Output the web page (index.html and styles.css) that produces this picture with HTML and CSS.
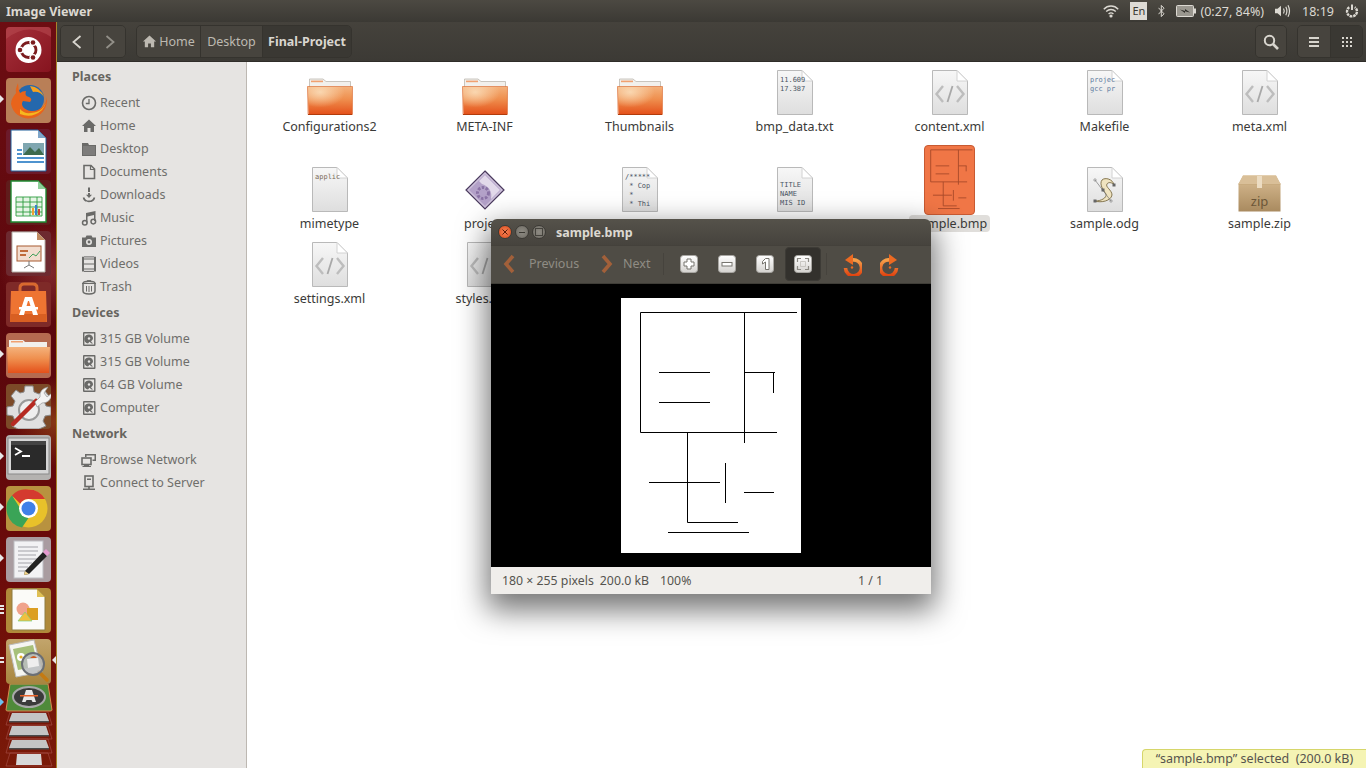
FILE: index.html
```html
<!DOCTYPE html>
<html lang="en">
<head>
    <meta charset="UTF-8">
    <meta name="viewport" content="width=device-width, initial-scale=1.0">
    <title>Image Viewer</title>
    <link rel="stylesheet" href="styles.css">
</head>
<body>
    <svg class="defs" aria-hidden="true">
        <defs>
            <linearGradient id="paperFill" x1="0" y1="0" x2="0" y2="1">
                <stop offset="0" stop-color="#f7f7f7"/>
                <stop offset="1" stop-color="#dedede"/>
            </linearGradient>
            <linearGradient id="folderFill" x1="0" y1="0" x2="0" y2="1">
                <stop offset="0" stop-color="#f4b27c"/>
                <stop offset="0.45" stop-color="#ef8f4e"/>
                <stop offset="1" stop-color="#e4501a"/>
            </linearGradient>
            <radialGradient id="folderGlow" cx="0.28" cy="0.2" r="0.55">
                <stop offset="0" stop-color="#fbe0bd" stop-opacity=".85"/>
                <stop offset="1" stop-color="#fbe0bd" stop-opacity="0"/>
            </radialGradient>
            <linearGradient id="boxFill" x1="0" y1="0" x2="0" y2="1">
                <stop offset="0" stop-color="#d9bd93"/>
                <stop offset="1" stop-color="#a98a5f"/>
            </linearGradient>
            <linearGradient id="rotFill" x1="0" y1="0" x2="0" y2="1">
                <stop offset="0" stop-color="#f5a04a"/>
                <stop offset="1" stop-color="#e0420f"/>
            </linearGradient>
            <linearGradient id="btnFill" x1="0" y1="0" x2="0" y2="1">
                <stop offset="0" stop-color="#ffffff"/>
                <stop offset="1" stop-color="#d4d2cf"/>
            </linearGradient>

            <g id="paper">
                <path d="M.5.5H25L35.5 11V44.5H.5Z" fill="url(#paperFill)" stroke="#b9b9b9"/>
                <path d="M25 .5V11H35.5Z" fill="#fff" stroke="#d2d2d2"/>
            </g>
            <g id="xmlmark" fill="none" stroke="#bdbdbd" stroke-width="2.4">
                <path d="M11 16L4.5 24L11 32"/>
                <path d="M25 16L31.5 24L25 32"/>
                <path d="M20.5 16L15.5 32" stroke="#a8a8a8" stroke-width="1.8"/>
            </g>
            <g id="folder">
                <path d="M2.5 1H16L19 3.5H43.5V10H2.5Z" fill="#f2f0ec" stroke="#bdb8b0" stroke-width=".8"/>
                <rect x="4" y="2.6" width="12" height="1.6" fill="#f0a070"/>
                <path d="M.5 8.5H45.5V36.5H1.5Z" fill="url(#folderFill)"/>
                <path d="M.5 8.5H45.5V36.5H1.5Z" fill="url(#folderGlow)"/>
                <path d="M.5 8.5H45.5L45.3 36.5H1Z" fill="none" stroke="#d8642c" stroke-width=".6"/>
                <path d="M1 36.5H45" stroke="#b23c0c"/>
            </g>
            <g id="plan" fill="none" stroke="currentColor">
                <path d="M176 14.5H19.5V134.5H156"/>
                <path d="M123.5 14.5V145"/>
                <path d="M38 74.5H89M38 104.5H89"/>
                <path d="M123.5 74.5H154M152.5 74.5V95"/>
                <path d="M66.5 134.5V224.5H117"/>
                <path d="M28 184.5H99"/>
                <path d="M104.5 165V205"/>
                <path d="M123 194.5H153"/>
                <path d="M47 234.5H128"/>
            </g>

            <g id="i-home"><path d="M8 1.5L15 8H13V14H9.5V10H6.5V14H3V8H1Z"/></g>
            <g id="i-clock" fill="none" stroke="currentColor"><circle cx="8" cy="8" r="6.5" stroke-width="1.6"/><path d="M8 4V8.5L4.8 8.5" stroke-width="1.3"/></g>
            <g id="i-folder"><path d="M1 2H7L8 4H15V15H1ZM2 5V14H14V5Z" fill-rule="evenodd"/><rect x="2" y="5" width="12" height="9" opacity=".85"/></g>
            <g id="i-doc"><path d="M3 1.5H10L13.5 5V14.5H3Z" fill="none" stroke="currentColor" stroke-width="1.6"/><path d="M9.5 1.5V5.5H13.5" fill="none" stroke="currentColor" stroke-width="1.2"/></g>
            <g id="i-down"><path d="M7 .5H9V5H7ZM7 6H9V7.8H11L8 11L5 7.8H7Z"/><path d="M1.8 10.5H3.6C3.8 12.6 5.6 13.6 8 13.6S12.2 12.6 12.4 10.5H14.2C14 13.6 11.4 15.2 8 15.2S2 13.6 1.8 10.5Z"/></g>
            <g id="i-music"><path d="M5 3L14.5 1V11H13V5L6.5 6.4V12.5H5Z"/><g fill="none" stroke="currentColor" stroke-width="1.5"><circle cx="3.8" cy="12.8" r="2.3"/><circle cx="12.3" cy="11.6" r="2.3"/></g></g>
            <g id="i-camera"><path d="M5.5 2.5H10.5L11.5 4.5H15V14H1V4.5H4.5ZM8 6A3 3 0 1 0 8 12A3 3 0 0 0 8 6Z" fill-rule="evenodd"/><circle cx="8" cy="9" r="1.4"/></g>
            <g id="i-film"><path d="M1 .8H3V15.5H1ZM13 .8H15V15.5H13Z"/><path d="M3 3H13M3 8H13M3 13H13M3 .9H13M3 15.4H13" stroke="currentColor" fill="none"/></g>
            <g id="i-trash" fill="none" stroke="currentColor"><path d="M2 4.5C2 3 5 2.2 8 2.2S14 3 14 4.5V12C14 14 11 15 8 15S2 14 2 12Z" stroke-width="1.5"/><path d="M1 4.5H15M5.5 7V12.5M8 7V13M10.5 7V12.5" stroke-width="1"/><path d="M6 2H10" stroke-width="1.6"/></g>
            <g id="i-disk"><path d="M3 1H13.5Q14.5 1 14.5 2V14Q14.5 15 13.5 15H3Q2 15 2 14V2Q2 1 3 1ZM3.4 2.4V13.6H13.1V2.4Z" fill-rule="evenodd"/><path d="M8.5 3.5A4 4 0 0 1 12 8L10 10.5L12 12.5H10.5L8.5 10.8L7 12.5A4.500 4.500 0 0 1 8.500 3.500Z"/><circle cx="8" cy="7.5" r="1.2" fill="#e6e4e2"/></g>
            <g id="i-net"><rect x="1" y="6" width="9" height="6.500" fill="none" stroke="currentColor" stroke-width="1.600"/><path d="M4 2H15V9H11.500V7.500H13.500V3.500H5.500V5H4Z"/><path d="M3 13H8V15H3Z"/><path d="M1.500 14.500H10" stroke="currentColor"/></g>
            <g id="i-server"><rect x="4" y="1" width="8" height="10.500" fill="none" stroke="currentColor" stroke-width="1.600"/><path d="M6 3.500H10V5H6Z"/><path d="M7.200 11.500H8.800V13.500H7.200ZM2 13.500H14V15H2Z"/></g>
        </defs>
    </svg>

    <header class="topbar">
        <span class="app-title">Image Viewer</span>
        <div class="indicators">
            <svg class="ind" width="16" height="14" viewBox="0 0 16 14" fill="none" stroke="#dcd9d2" stroke-width="1.4">
                <path d="M.8 5.200C4.800 1 11.200 1 15.200 5.200"/>
                <path d="M3.200 7.600C6 4.800 10 4.800 12.800 7.600"/>
                <path d="M5.600 10C7 8.700 9 8.700 10.400 10"/>
                <circle cx="8" cy="12" r=".9" fill="#dcd9d2"/>
            </svg>
            <span class="lang">En</span>
            <svg class="ind" width="7" height="14" viewBox="0 0 7 14" fill="none" stroke="#dcd9d2" stroke-width="1">
                <path d="M.5 3.800L6 9.800L3.300 12.600V1.400L6 4.200L.5 10.200"/>
            </svg>
            <svg class="ind" width="20" height="12" viewBox="0 0 20 12">
                <rect x=".5" y=".5" width="17" height="11" rx="1" fill="#9a978f" stroke="#dcd9d2"/>
                <rect x="18" y="3.500" width="2" height="5" fill="#dcd9d2"/>
                <path d="M4 4.500L9 6V4L14 7.500L9 6.200V8Z" fill="#2f2d29"/>
            </svg>
            <span class="battery-text">(0:27, 84%)</span>
            <svg class="ind" width="16" height="14" viewBox="0 0 16 14" fill="none" stroke="#dcd9d2" stroke-width="1.200">
                <path d="M0 4.800H2.500L6 1.800V12.200L2.500 9.200H0Z" fill="#dcd9d2" stroke="none"/>
                <path d="M8.500 4.500Q10 7 8.500 9.500"/>
                <path d="M10.800 2.800Q13 7 10.800 11.200"/>
                <path d="M13 1.200Q16 7 13 12.800"/>
            </svg>
            <span class="clock">18:19</span>
            <svg class="ind" width="14" height="14" viewBox="0 0 14 14" fill="none" stroke="#dcd9d2">
                <path d="M4.300 3.200A5 5 0 1 0 9.700 3.200" stroke-width="2.400" stroke-dasharray="2.600 .8"/>
                <path d="M7 .5V6" stroke-width="2"/>
            </svg>
        </div>
    </header>

    <div class="desktop">
        <nav class="launcher">
            <div class="tile tile-dash">
                <svg viewBox="0 0 45 45">
                    <path d="M0 12Q22 -6 45 10V0H0Z" fill="#b6484f" opacity=".6"/>
                    <circle cx="22.500" cy="23" r="13" fill="#fff"/>
                    <circle cx="22.500" cy="23" r="7.500" fill="none" stroke="#7c1c1f" stroke-width="2.800"/>
                    <g fill="#fff"><circle cx="14" cy="23" r="3.600"/><circle cx="27" cy="15.500" r="3.600"/><circle cx="27" cy="30.500" r="3.600"/></g>
                    <g fill="#7c1c1f"><circle cx="14" cy="23" r="2.300"/><circle cx="27" cy="15.500" r="2.300"/><circle cx="27" cy="30.500" r="2.300"/></g>
                </svg>
            </div>
            <div class="tile tile-firefox">
                <svg viewBox="0 0 45 45">
                    <circle cx="24" cy="21" r="14" fill="#2568ad"/>
                    <path d="M24 8Q34 9 38 19Q34 13 27 14Z" fill="#f6a21e"/>
                    <path d="M12 5Q9 12 10 15Q5 21 5 26C7 37 18 42 26 40C35 39 42 30 41 19C40 28 33 34 25 33C18 32 14 27 17 23L24 24Q27 21 23 19Q18 18 20 13Q16 13 14 15Q12 11 12 5Z" fill="#e8641b"/>
                    <path d="M14 36Q26 41 36 32Q40 27 41 20Q39 34 25 35Q18 36 14 31Z" fill="#f6b81e"/>
                </svg>
            </div>
            <div class="tile tile-writer">
                <svg viewBox="0 0 45 45">
                    <path d="M5 1H32L40 9V42H5Z" fill="#fff" stroke="#1f5f9a" stroke-width="1"/>
                    <path d="M32 1L40 9H32Z" fill="#7fa6c9"/>
                    <rect x="17" y="14" width="21" height="12" fill="#7fa6b0"/>
                    <path d="M17 26L24 18L29 23L33 19L38 26Z" fill="#3d6a4d"/>
                    <path d="M11 21H16M11 25H16M11 29H38M11 33H38" stroke="#4f93cf" stroke-width="2"/>
                </svg>
            </div>
            <div class="tile tile-calc">
                <svg viewBox="0 0 45 45">
                    <path d="M5 1H32L40 9V42H5Z" fill="#fff" stroke="#1f8a32" stroke-width="1.400"/>
                    <path d="M32 1L40 9H32Z" fill="#8fd09a"/>
                    <path d="M10 17H36V36H10ZM10 22H36M10 27H36M10 32H36M17 17V36M24 17V36M31 17V36" fill="#e6f5e6" stroke="#2c9d40" stroke-width=".9"/>
                    <rect x="26" y="28" width="2" height="7" fill="#f0a030"/><rect x="29" y="25" width="2" height="10" fill="#3b7fd0"/><rect x="32" y="29" width="2" height="6" fill="#d04a30"/>
                </svg>
            </div>
            <div class="tile tile-impress">
                <svg viewBox="0 0 45 45">
                    <path d="M6 1H31L39 9V41H6Z" fill="#fff" stroke="#b5b0a8"/>
                    <path d="M31 1L39 9H31Z" fill="#c08a60"/>
                    <rect x="11" y="15" width="24" height="15" fill="#f2ddd0" stroke="#a85a30"/>
                    <rect x="14" y="19" width="8" height="2" fill="#c06a3a"/><rect x="14" y="23" width="6" height="2" fill="#c06a3a"/>
                    <path d="M23 27L27 23L30 25L34 20" stroke="#3fa05a" fill="none"/>
                    <path d="M23 30V34M23 34L18 37M23 34L28 37" stroke="#777"/>
                </svg>
            </div>
            <div class="tile tile-software">
                <svg viewBox="0 0 45 45">
                    <path d="M14 11V6Q14 2 18 2H27Q31 2 31 6V11" fill="none" stroke="#d8692f" stroke-width="3"/>
                    <path d="M5 9H40L41 40H4Z" fill="#ee7432"/>
                    <path d="M4.500 32H40.500V40H4Z" fill="#d85f22"/>
                    <path d="M19 15H26L32 33H27L26 29H19L18 33H13ZM20.500 24H24.500L23 19H22Z" fill="#fff" fill-rule="evenodd"/>
                    <rect x="13" y="25" width="19" height="2.500" fill="#fff"/>
                </svg>
            </div>
            <div class="tile tile-files">
                <svg viewBox="0 0 45 45">
                    <path d="M3 7H17L19 9H41V18H3Z" fill="#f2f0ec"/>
                    <rect x="5" y="8" width="12" height="1.500" fill="#f0a070"/>
                    <path d="M1 14H44L43 40H2Z" fill="url(#folderFill)"/>
                </svg>
            </div>
            <div class="tile tile-settings">
                <svg viewBox="0 0 45 45">
                    <path d="M19 2H27L28 8L33 10L38 6L43 12L38 17L40 22L45 23V31L39 32L37 37L40 42L33 45H12L6 42L9 37L7 32L1 31V23L7 22L9 17L5 12L10 6L14 9L18 8Z" fill="#e0e0e0" stroke="#8a8a8a"/>
                    <circle cx="23" cy="26" r="10" fill="#eeeeee" stroke="#9a9a9a" stroke-width="2"/>
                    <path d="M7 40L30 17" stroke="#b62a22" stroke-width="4.500" stroke-linecap="round"/>
                    <path d="M29 18L34 13Q33 5 42 3L38 9L41 13L46 9Q45 19 36 19L31 23Z" fill="#f4f4f4" stroke="#999" stroke-width=".7"/>
                </svg>
            </div>
            <div class="tile tile-terminal">
                <svg viewBox="0 0 45 45">
                    <rect x="2" y="3" width="41" height="36" fill="#d6d6d6" stroke="#8a8a8a"/>
                    <rect x="5" y="6" width="35" height="29" fill="#2a2a2a"/>
                    <rect x="5" y="6" width="35" height="4" fill="#444"/>
                    <path d="M9 13L15 16.500L9 20" fill="none" stroke="#fff" stroke-width="1.800"/>
                    <path d="M16 21H24" stroke="#fff" stroke-width="1.800"/>
                </svg>
            </div>
            <div class="tile tile-chrome">
                <svg viewBox="0 0 45 45">
                    <circle cx="22.500" cy="22.500" r="19" fill="#e8c12a"/>
                    <path d="M22.500 3.500A19 19 0 0 1 39 13H22.500A9.500 9.500 0 0 0 14.300 17.700L6 9.500A19 19 0 0 1 22.500 3.500Z" fill="#d43a2f"/>
                    <path d="M6 9.500L14.300 22.500A9.500 9.500 0 0 0 22.500 32L16 41.500A19 19 0 0 1 6 9.500Z" fill="#3aa457"/>
                    <circle cx="22.500" cy="22.500" r="9.500" fill="#fff"/>
                    <circle cx="22.500" cy="22.500" r="7" fill="#3f80e8"/>
                </svg>
            </div>
            <div class="tile tile-editor">
                <svg viewBox="0 0 45 45">
                    <rect x="8" y="4" width="29" height="37" fill="#f2f2f4" stroke="#bdbdc2"/>
                    <path d="M12 10H32M12 14H32M12 18H30M12 22H32M12 26H26M12 30H22M12 34H24" stroke="#a2a2a8"/>
                    <path d="M19 34L37 15L41 19L23 37L18 38Z" fill="#222"/>
                    <path d="M37 15L40 12L44 16L41 19Z" fill="#e59ad0"/>
                    <path d="M19 34L23 37L18 38Z" fill="#f2d58a"/>
                </svg>
            </div>
            <div class="tile tile-draw">
                <svg viewBox="0 0 45 45">
                    <path d="M6 1H31L39 9V42H6Z" fill="#fbfbf8" stroke="#8f7d40" stroke-width="1"/>
                    <path d="M31 1L39 9H31Z" fill="#dfc055"/>
                    <circle cx="17" cy="21" r="6.500" fill="#f0a38c"/>
                    <rect x="21" y="20" width="11" height="12" fill="#dc9f22"/>
                    <path d="M12 33L19 24L26 33Z" fill="#f0c040" stroke="#7fd07f" stroke-width=".7"/>
                </svg>
            </div>
            <div class="tile tile-viewer">
                <svg viewBox="0 0 45 45">
                    <path d="M3 6L28 1L36 33L10 38Z" fill="#f5f5f2" stroke="#bbb"/>
                    <path d="M7 10L27 6L32 27L12 31Z" fill="#a6c07a"/>
                    <circle cx="15" cy="18" r="4" fill="#fff"/><circle cx="15" cy="18" r="1.600" fill="#e8b020"/>
                    <path d="M33 33L41 41" stroke="#c47a12" stroke-width="3.500" stroke-linecap="round"/>
                    <circle cx="27" cy="25" r="11" fill="#b8bcc0" fill-opacity=".85" stroke="#6b6f75" stroke-width="2"/>
                    <path d="M21 20L32 19L33 27L22 29Z" fill="#eee"/>
                    <path d="M24 19Q28 15 31 19" fill="#d05a20"/>
                </svg>
            </div>
            <div class="tile-squash">
                <svg viewBox="0 0 48 28">
                    <path d="M5 0H43L47 26Q47 27 45 27H3Q1 27 1 26Z" fill="#4f8a3a" stroke="#d98a50"/>
                    <ellipse cx="24" cy="13" rx="16" ry="10" fill="#3a3a3a" stroke="#a8a8a8" stroke-width="2"/>
                    <path d="M21 6H27L31 18H27.500L26.500 16H21.500L20.500 18H17Z" fill="#e8e8e8"/>
                    <rect x="15" y="11" width="18" height="1.500" fill="#e8632a"/>
                </svg>
            </div>
            <div class="tile-stack">
                <svg viewBox="0 0 48 56">
                    <g fill="none" stroke="#a8504a" stroke-width=".6">
                        <path d="M5 0H43L47 13H1Z"/><path d="M5 14H43L47 27H1Z"/><path d="M5 27H43L47 41H1Z"/><path d="M5 41H43L47 54H1Z"/>
                    </g>
                    <g fill="#c4c4c4">
                        <path d="M7 1H41L44 9H4Z"/><path d="M7 14H41L44 23H4Z"/><path d="M7 28H41L44 36H4Z"/>
                        <path d="M12 42H36L37 53H11Z" fill="#d8d8d8"/>
                    </g>
                    <g fill="#4a4a4a"><path d="M4 9H44V10.500H4Z"/><path d="M4 23H44V24.500H4Z"/><path d="M4 36H44V37.500H4Z"/></g>
                </svg>
            </div>

            <span class="pip pip-firefox"></span>
            <span class="pip pip-files"></span>
            <span class="pip pip-terminal"></span>
            <span class="pip pip-chrome"></span>
            <span class="pip pip-editor"></span>
            <span class="dash dash-a"></span><span class="dash dash-b"></span><span class="dash dash-c"></span>
            <span class="dash dash-d"></span><span class="dash dash-e"></span>
            <span class="pip pip-active"></span>
            <span class="pip pip-updates"></span>
        </nav>

        <div class="files-window">
            <div class="toolbar">
                <div class="btn-group">
                    <div class="tool-btn nav-btn">
                        <svg width="12" height="14" viewBox="0 0 12 14" fill="none" stroke="#d8d5ce" stroke-width="1.800"><path d="M9.500 1L2.500 7L9.500 13"/></svg>
                    </div>
                    <div class="tool-btn nav-btn">
                        <svg width="12" height="14" viewBox="0 0 12 14" fill="none" stroke="#928f88" stroke-width="1.800"><path d="M2.500 1L9.500 7L2.500 13"/></svg>
                    </div>
                </div>
                <div class="btn-group path-bar">
                    <div class="tool-btn crumb crumb-home">
                        <svg class="crumb-icon" viewBox="0 0 16 16"><use href="#i-home"/></svg>Home
                    </div>
                    <div class="tool-btn crumb crumb-desktop">Desktop</div>
                    <div class="tool-btn crumb crumb-current">Final-Project</div>
                </div>
                <div class="toolbar-right">
                    <div class="btn-group">
                        <div class="tool-btn icon-btn icon-btn-search">
                            <svg width="16" height="16" viewBox="0 0 16 16" fill="none" stroke="#d8d5ce" stroke-width="2"><circle cx="6.500" cy="6.500" r="4.700"/><path d="M10 10L15 15" stroke-width="2.600"/></svg>
                        </div>
                    </div>
                    <div class="btn-group">
                        <div class="tool-btn icon-btn">
                            <svg width="12" height="12" viewBox="0 0 12 12" fill="#d8d5ce"><rect x="1" y="1" width="10" height="2"/><rect x="1" y="5" width="10" height="2"/><rect x="1" y="9" width="10" height="2"/></svg>
                        </div>
                        <div class="tool-btn icon-btn icon-btn-dark">
                            <svg width="12" height="12" viewBox="0 0 12 12" fill="#d8d5ce"><rect x="1" y="1" width="2" height="2"/><rect x="5" y="1" width="2" height="2"/><rect x="9" y="1" width="2" height="2"/><rect x="1" y="5" width="2" height="2"/><rect x="5" y="5" width="2" height="2"/><rect x="9" y="5" width="2" height="2"/><rect x="1" y="9" width="2" height="2"/><rect x="5" y="9" width="2" height="2"/><rect x="9" y="9" width="2" height="2"/></svg>
                        </div>
                    </div>
                </div>
            </div>

            <div class="files-body">
                <aside class="sidebar">
                    <h3>Places</h3>
                    <ul>
                        <li><svg viewBox="0 0 16 16"><use href="#i-clock"/></svg>Recent</li>
                        <li><svg viewBox="0 0 16 16"><use href="#i-home"/></svg>Home</li>
                        <li><svg viewBox="0 0 16 16"><use href="#i-folder"/></svg>Desktop</li>
                        <li><svg viewBox="0 0 16 16"><use href="#i-doc"/></svg>Documents</li>
                        <li><svg viewBox="0 0 16 16"><use href="#i-down"/></svg>Downloads</li>
                        <li><svg viewBox="0 0 16 16"><use href="#i-music"/></svg>Music</li>
                        <li><svg viewBox="0 0 16 16"><use href="#i-camera"/></svg>Pictures</li>
                        <li><svg viewBox="0 0 16 16"><use href="#i-film"/></svg>Videos</li>
                        <li><svg viewBox="0 0 16 16"><use href="#i-trash"/></svg>Trash</li>
                    </ul>
                    <h3>Devices</h3>
                    <ul>
                        <li><svg viewBox="0 0 16 16"><use href="#i-disk"/></svg>315 GB Volume</li>
                        <li><svg viewBox="0 0 16 16"><use href="#i-disk"/></svg>315 GB Volume</li>
                        <li><svg viewBox="0 0 16 16"><use href="#i-disk"/></svg>64 GB Volume</li>
                        <li><svg viewBox="0 0 16 16"><use href="#i-disk"/></svg>Computer</li>
                    </ul>
                    <h3>Network</h3>
                    <ul>
                        <li><svg viewBox="0 0 16 16"><use href="#i-net"/></svg>Browse Network</li>
                        <li><svg viewBox="0 0 16 16"><use href="#i-server"/></svg>Connect to Server</li>
                    </ul>
                </aside>

                <main class="file-grid">
                    <div class="file">
                        <svg class="icon-folder" viewBox="0 0 46 37"><use href="#folder"/></svg>
                        <span class="file-name">Configurations2</span>
                    </div>
                    <div class="file">
                        <svg class="icon-folder" viewBox="0 0 46 37"><use href="#folder"/></svg>
                        <span class="file-name">META-INF</span>
                    </div>
                    <div class="file">
                        <svg class="icon-folder" viewBox="0 0 46 37"><use href="#folder"/></svg>
                        <span class="file-name">Thumbnails</span>
                    </div>
                    <div class="file">
                        <svg class="icon-doc" viewBox="0 0 36 45"><use href="#paper"/><text class="peek peek-grey" x="3" y="12">11.609</text><text class="peek peek-grey" x="3" y="21">17.387</text></svg>
                        <span class="file-name">bmp_data.txt</span>
                    </div>
                    <div class="file">
                        <svg class="icon-doc" viewBox="0 0 36 45"><use href="#paper"/><use href="#xmlmark"/></svg>
                        <span class="file-name">content.xml</span>
                    </div>
                    <div class="file">
                        <svg class="icon-doc" viewBox="0 0 36 45"><use href="#paper"/><text class="peek peek-blue" x="3" y="12">projec</text><text class="peek peek-blue" x="3" y="21">gcc pr</text></svg>
                        <span class="file-name">Makefile</span>
                    </div>
                    <div class="file">
                        <svg class="icon-doc" viewBox="0 0 36 45"><use href="#paper"/><use href="#xmlmark"/></svg>
                        <span class="file-name">meta.xml</span>
                    </div>

                    <div class="file">
                        <svg class="icon-doc" viewBox="0 0 36 45"><use href="#paper"/><text class="peek peek-brown" x="3" y="12">applic</text></svg>
                        <span class="file-name">mimetype</span>
                    </div>
                    <div class="file">
                        <svg class="icon-glade" viewBox="0 0 40 40">
                            <path d="M20 1L39 20L20 39L1 20Z" fill="#cfc2dc" stroke="#4a3a5e" stroke-width="1.200"/>
                            <path d="M20 4L36 20L20 36L4 20Z" fill="#b3a1c8"/>
                            <path d="M20 5L35 20L26 29Q28 18 17 14L14 11Z" fill="#e2d9ea"/>
                            <circle cx="18" cy="23" r="5.500" fill="none" stroke="#8a72a5" stroke-width="3" stroke-dasharray="2.500 1.500"/>
                        </svg>
                        <span class="file-name">project</span>
                    </div>
                    <div class="file">
                        <svg class="icon-doc" viewBox="0 0 36 45"><use href="#paper"/><text class="peek peek-grey" x="3" y="12">/*****</text><text class="peek peek-grey" x="3" y="21"> * Cop</text><text class="peek peek-grey" x="3" y="30"> *</text><text class="peek peek-grey" x="3" y="39"> * Thi</text></svg>
                        <span class="file-name"></span>
                    </div>
                    <div class="file">
                        <svg class="icon-doc" viewBox="0 0 36 45"><use href="#paper"/><text class="peek peek-grey" x="3" y="20">TITLE</text><text class="peek peek-grey" x="3" y="29">NAME</text><text class="peek peek-grey" x="3" y="38">MIS ID</text></svg>
                        <span class="file-name"></span>
                    </div>
                    <div class="file">
                        <div class="thumb-selected">
                            <svg class="thumb-plan" viewBox="0 0 180 255"><use href="#plan"/></svg>
                        </div>
                        <span class="file-name file-name-selected">sample.bmp</span>
                    </div>
                    <div class="file">
                        <svg class="icon-doc" viewBox="0 0 36 45">
                            <use href="#paper"/>
                            <path d="M27 18C26 12 18 10 15 13C12 17 16 23 19 27C20 31 14 34 8 34C14 36 24 34 25 28C25 23 18 20 20 17C21 15 25 15 27 18Z" fill="#efe3c0" stroke="#6b5a30" stroke-width=".8"/>
                            <path d="M8 13L24 34" stroke="#777" stroke-width=".7"/>
                            <circle cx="8" cy="13" r="1.200" fill="none" stroke="#777" stroke-width=".6"/><circle cx="24" cy="34" r="1.200" fill="none" stroke="#777" stroke-width=".6"/>
                            <rect x="25.500" y="16.500" width="3" height="3" fill="#666"/><rect x="6.500" y="32.500" width="3" height="3" fill="#666"/><rect x="14.500" y="21.500" width="3" height="3" fill="#666"/>
                        </svg>
                        <span class="file-name">sample.odg</span>
                    </div>
                    <div class="file">
                        <svg class="icon-zip" viewBox="0 0 43 37">
                            <path d="M5 .5H38L42.500 9V36.500H.5V9Z" fill="url(#boxFill)"/>
                            <path d="M.5 9H42.500" stroke="#c4a679"/>
                            <path d="M5 .5H38L42.500 9H.5Z" fill="#d9bf98"/>
                            <rect x="19" y="1" width="5" height="12" fill="#ecdcc2"/>
                            <text class="zip-text" x="21.500" y="31" text-anchor="middle">zip</text>
                        </svg>
                        <span class="file-name">sample.zip</span>
                    </div>

                    <div class="file">
                        <svg class="icon-doc" viewBox="0 0 36 45"><use href="#paper"/><use href="#xmlmark"/></svg>
                        <span class="file-name">settings.xml</span>
                    </div>
                    <div class="file">
                        <svg class="icon-doc" viewBox="0 0 36 45"><use href="#paper"/><use href="#xmlmark"/></svg>
                        <span class="file-name">styles.xml</span>
                    </div>
                </main>
            </div>
        </div>
    </div>

    <section class="viewer">
        <div class="viewer-title">
            <span class="win-btn win-close">
                <svg width="6" height="6" viewBox="0 0 6 6" stroke="#5a1a08" stroke-width="1"><path d="M.5.5L5.500 5.500M5.500.5L.5 5.500"/></svg>
            </span>
            <span class="win-btn win-min"></span>
            <span class="win-btn win-max"></span>
            <span class="viewer-name">sample.bmp</span>
        </div>
        <div class="viewer-tools">
            <svg class="chevron" width="12" height="20" viewBox="0 0 12 20" fill="none" stroke="#a2603a" stroke-width="3.600"><path d="M10 2L3 10L10 18"/></svg>
            <span class="tool-label label-prev">Previous</span>
            <svg class="chevron chevron-next" width="12" height="20" viewBox="0 0 12 20" fill="none" stroke="#a2603a" stroke-width="3.600"><path d="M2 2L9 10L2 18"/></svg>
            <span class="tool-label label-next">Next</span>
            <span class="tool-sep"></span>
            <div class="zoom-btn">
                <svg class="zoom-key" viewBox="0 0 18 18"><rect x=".5" y=".5" width="17" height="17" rx="3" fill="url(#btnFill)" stroke="#a9a7a3"/><path d="M7 4H11V7H14V11H11V14H7V11H4V7H7Z" fill="#fff" stroke="#77756f"/></svg>
            </div>
            <div class="zoom-btn">
                <svg class="zoom-key" viewBox="0 0 18 18"><rect x=".5" y=".5" width="17" height="17" rx="3" fill="url(#btnFill)" stroke="#a9a7a3"/><rect x="4" y="7.500" width="10" height="3.500" fill="#fff" stroke="#77756f"/></svg>
            </div>
            <div class="zoom-btn">
                <svg class="zoom-key" viewBox="0 0 18 18"><rect x=".5" y=".5" width="17" height="17" rx="3" fill="url(#btnFill)" stroke="#a9a7a3"/><path d="M9.500 3.500H13V14.500H9.500V7L6.500 9V6.500Z" fill="#fff" stroke="#77756f"/></svg>
            </div>
            <div class="zoom-btn zoom-btn-active">
                <svg class="zoom-key" viewBox="0 0 18 18"><rect x=".5" y=".5" width="17" height="17" rx="3" fill="url(#btnFill)" stroke="#a9a7a3"/><path d="M3.500 7V3.500H7M11 3.500H14.500V7M14.500 11V14.500H11M7 14.500H3.500V11" fill="none" stroke="#8c8a84" stroke-width="1.200"/><path d="M6.500 9V6.500H11.500V11.500H6.500Z" fill="none" stroke="#c0beb9" stroke-width=".8"/></svg>
            </div>
            <span class="tool-sep tool-sep-b"></span>
            <div class="zoom-btn">
                <svg class="rotate-key" viewBox="0 0 20 24" fill="none"><path d="M3.500 16A8 8 0 1 0 10 8" stroke="url(#rotFill)" stroke-width="3.600"/><path d="M11 2V13L3 8Z" fill="#ec6a22"/><circle cx="10" cy="15.500" r="1.200" fill="#ec6a22"/></svg>
            </div>
            <div class="zoom-btn">
                <svg class="rotate-key" viewBox="0 0 20 24" fill="none"><path d="M16.500 16A8 8 0 1 1 10 8" stroke="url(#rotFill)" stroke-width="3.600"/><path d="M9 2V13L17 8Z" fill="#ec6a22"/><circle cx="10" cy="15.500" r="1.200" fill="#ec6a22"/></svg>
            </div>
        </div>
        <div class="viewer-image">
            <svg class="bitmap" width="180" height="255" viewBox="0 0 180 255"><use href="#plan"/></svg>
        </div>
        <div class="viewer-status">
            <span class="status-size">180 × 255 pixels</span>
            <span class="status-bytes">200.0 kB</span>
            <span class="status-zoom">100%</span>
            <span class="status-count">1 / 1</span>
        </div>
    </section>

    <div class="selection-note">“sample.bmp” selected&nbsp; (200.0 kB)</div>
</body>
</html>
```

FILE: styles.css
```css
/* General Styling */
* {
    box-sizing: border-box;
}

html, body {
    height: 100%;
}

body {
    margin: 0;
    width: 1366px;
    height: 768px;
    overflow: hidden;
    display: flex;
    flex-direction: column;
    position: relative;
    font-family: 'Noto Sans', 'Open Sans', sans-serif;
    font-size: 12.5px;
    background: #fff;
}

.defs {
    position: absolute;
    width: 0;
    height: 0;
}

/* Top panel */
.topbar {
    height: 22px;
    flex: none;
    display: flex;
    align-items: center;
    justify-content: space-between;
    padding: 0 7px 0 6px;
    background: linear-gradient(#4c4942, #3b3934);
    color: #dcd9d2;
}

.app-title {
    font-weight: 700;
    font-size: 12.5px;
}

.indicators {
    display: flex;
    align-items: center;
    gap: 11px;
}

.ind {
    display: block;
}

.lang {
    width: 17px;
    height: 18px;
    line-height: 18px;
    text-align: center;
    background: #dedbd5;
    color: #3a3832;
    font-size: 11px;
}

.battery-text {
    margin-left: -7px;
    font-size: 12.5px;
}

.clock {
    font-size: 12.5px;
}

/* Launcher */
.desktop {
    flex: 1;
    display: flex;
    min-height: 0;
}

.launcher {
    width: 57px;
    flex: none;
    position: relative;
    display: flex;
    flex-direction: column;
    gap: 6px;
    padding: 5px 0 0 6px;
    overflow: hidden;
    background:
        radial-gradient(circle at 50px 250px, rgba(160, 70, 70, 0.5), transparent 50px),
        radial-gradient(circle at 55px 400px, rgba(180, 110, 30, 0.45), transparent 45px),
        linear-gradient(#6d0d12, #5a070c 45%, #6a0a0a 70%, #7a1a08);
    border-right: 1px solid #a8842a;
}

.tile {
    width: 45px;
    height: 45px;
    flex: none;
    border-radius: 4px;
    overflow: hidden;
}

.tile svg {
    display: block;
    width: 45px;
    height: 45px;
}

.tile-dash { background: linear-gradient(135deg, #a5303a, #86141f); }
.tile-firefox { background: #b97f57; }
.tile-writer { background: #6c1a2a; }
.tile-calc { background: #601c1c; }
.tile-impress { background: #6d2a30; }
.tile-software { background: #7e2a28; }
.tile-files { background: #b56a50; }
.tile-settings { background: #7c4a28; }
.tile-terminal { background: #b4b2b0; }
.tile-chrome { background: #b8923f; }
.tile-editor { background: #a99ca0; }
.tile-draw { background: #b08a3a; }
.tile-viewer { background: linear-gradient(#c2a56c, #a8853f); }

.tile-squash {
    width: 48px;
    height: 28px;
    margin: -6px 0 0 -1px;
    flex: none;
}

.tile-stack {
    width: 48px;
    height: 56px;
    margin: -6px 0 0 -1px;
    flex: none;
}

.tile-squash svg, .tile-stack svg {
    display: block;
    width: 100%;
    height: 100%;
}

.pip {
    position: absolute;
    left: 0;
    width: 0;
    height: 0;
    border-style: solid;
    border-width: 4px 0 4px 4px;
    border-color: transparent transparent transparent #e8e8e8;
}

.pip-firefox { top: 73px; }
.pip-files { top: 328px; }
.pip-terminal { top: 430px; }
.pip-chrome { top: 481px; }
.pip-editor { top: 532px; }
.pip-updates { top: 676px; border-left-color: #6cc0ee; }

.pip-active {
    top: 634px;
    left: 52px;
    border-width: 4px 4px 4px 0;
    border-color: transparent #e8e8e8 transparent transparent;
}

.dash {
    position: absolute;
    left: 0;
    width: 4px;
    height: 2px;
    background: #e8e8e8;
}

.dash-a { top: 583px; }
.dash-b { top: 586px; }
.dash-c { top: 590px; }
.dash-d { top: 635px; }
.dash-e { top: 639px; }

/* File manager */
.files-window {
    flex: 1;
    min-width: 0;
    display: flex;
    flex-direction: column;
}

.toolbar {
    height: 40px;
    flex: none;
    display: flex;
    align-items: center;
    gap: 10px;
    padding: 0 3px 0 3px;
    background: linear-gradient(#45423c, #3c3a35);
    border-bottom: 1px solid #2f2d29;
}

.btn-group {
    height: 33px;
    display: flex;
    border-radius: 5px;
    overflow: hidden;
    border: 1px solid #35332e;
}

.tool-btn {
    display: flex;
    align-items: center;
    justify-content: center;
    background: #47443e;
    color: #bdb9b1;
    border-left: 1px solid #35332e;
}

.tool-btn:first-child {
    border-left: none;
}

.nav-btn {
    width: 32px;
}

.crumb {
    font-size: 12.5px;
}

.crumb-home {
    width: 63px;
}

.crumb-desktop {
    width: 62px;
}

.crumb-current {
    width: 89px;
    background: #3a3833;
    color: #d9d6cf;
    font-weight: 700;
}

.crumb-icon {
    width: 15px;
    height: 15px;
    margin-right: 2px;
    fill: #bdb9b1;
}

.toolbar-right {
    margin-left: auto;
    display: flex;
    gap: 10px;
}

.icon-btn {
    width: 32px;
}

.icon-btn-search {
    width: 30px;
}

.icon-btn-dark {
    background: #3a3833;
}

.files-body {
    flex: 1;
    min-height: 0;
    display: flex;
}

.sidebar {
    width: 190px;
    flex: none;
    padding: 6px 0 0 15px;
    background: #e6e4e2;
    border-right: 1px solid #bdb8b2;
    color: #6f6e6b;
}

.sidebar h3 {
    margin: 0;
    height: 18px;
    line-height: 18px;
    font-size: 12.5px;
    font-weight: 700;
    color: #66655f;
}

.sidebar ul {
    list-style: none;
    margin: 0 0 6px;
    padding: 5px 0 0;
}

.sidebar li {
    height: 23px;
    display: flex;
    align-items: center;
    gap: 3px;
    padding-left: 9px;
}

.sidebar li svg {
    width: 16px;
    height: 16px;
    flex: none;
    fill: #6a6a68;
    color: #6a6a68;
}

.file-grid {
    flex: 1;
    display: grid;
    grid-template-columns: repeat(7, 155px);
    grid-auto-rows: max-content;
    row-gap: 10px;
    align-items: end;
    padding: 8px 0 0 5px;
    background: #fff;
}

.file {
    display: flex;
    flex-direction: column;
    align-items: center;
}

.file svg {
    display: block;
}

.icon-doc {
    width: 36px;
    height: 45px;
    margin-bottom: 3px;
}

.icon-folder {
    width: 46px;
    height: 37px;
    margin-bottom: 3px;
}

.icon-glade {
    width: 40px;
    height: 40px;
    margin-bottom: 5px;
}

.icon-zip {
    width: 43px;
    height: 37px;
    margin-bottom: 3px;
}

.peek {
    font-family: 'DejaVu Sans Mono', 'Liberation Mono', monospace;
    font-size: 7px;
    white-space: pre;
}

.peek-grey { fill: #4a5564; }
.peek-blue { fill: #5d7a9e; }
.peek-brown { fill: #7a6a58; }

.zip-text {
    font-family: 'Noto Sans', sans-serif;
    font-size: 13px;
    fill: #6b5638;
}

.file-name {
    height: 17px;
    line-height: 17px;
    padding: 0 5px;
    color: #3a3a38;
    white-space: nowrap;
}

.file-name-selected {
    width: 81px;
    text-align: center;
    background: #e0dedb;
    border-radius: 4px;
}

.thumb-selected {
    width: 51px;
    height: 70px;
    display: flex;
    align-items: center;
    justify-content: center;
    background: #f07646;
    border: 1px solid #c85a32;
    border-radius: 4px;
}

.thumb-plan {
    width: 49px;
    height: 68px;
    color: #a84a2a;
    stroke-width: 3.4;
}

/* Image viewer window */
.viewer {
    position: absolute;
    left: 491px;
    top: 219px;
    width: 440px;
    height: 375px;
    display: flex;
    flex-direction: column;
    border-radius: 6px 6px 0 0;
    box-shadow: 0 12px 30px 4px rgba(0, 0, 0, 0.55);
}

.viewer-title {
    height: 26px;
    flex: none;
    display: flex;
    align-items: center;
    padding-left: 7px;
    background: linear-gradient(#55524a, #46433d);
    border-radius: 6px 6px 0 0;
}

.win-btn {
    width: 14px;
    height: 14px;
    margin-right: 3px;
    border-radius: 50%;
    display: flex;
    align-items: center;
    justify-content: center;
    background: radial-gradient(circle, #8e8b83, #6f6c65);
    border: 1px solid #3c3a35;
}

.win-close {
    background: radial-gradient(circle, #f5855a, #df4a18);
}

.win-min::after {
    content: "";
    width: 6px;
    height: 1px;
    background: #3a3832;
}

.win-max::after {
    content: "";
    width: 6px;
    height: 6px;
    border: 1px solid #45433d;
}

.viewer-name {
    margin-left: 7px;
    font-weight: 700;
    font-size: 12.5px;
    color: #dcd9d2;
}

.viewer-tools {
    height: 39px;
    flex: none;
    display: flex;
    align-items: center;
    padding: 0 0 2px 12px;
    background: #4f4c45;
    border-top: 1px solid #44413b;
    border-bottom: 1px solid #3f3d37;
}

.tool-label {
    color: #8f8c84;
    font-size: 12.5px;
}

.label-prev {
    width: 72px;
    margin-left: 14px;
}

.chevron-next {
    flex: none;
}

.label-next {
    width: 40px;
    margin-left: 10px;
}

.tool-sep {
    width: 1px;
    height: 22px;
    margin-right: 7px;
    background: #46433d;
}

.tool-sep-b {
    margin-left: 3px;
}

.zoom-btn {
    width: 36px;
    height: 34px;
    margin-right: 2px;
    flex: none;
    display: flex;
    align-items: center;
    justify-content: center;
    border-radius: 4px;
}

.zoom-btn-active {
    background: #33312d;
    border: 1px solid #3d3b36;
}

.zoom-key {
    width: 18px;
    height: 18px;
}

.rotate-key {
    width: 20px;
    height: 24px;
}

.viewer-image {
    flex: 1;
    min-height: 0;
    display: flex;
    align-items: center;
    justify-content: center;
    background: #000;
}

.bitmap {
    display: block;
    background: #fff;
    color: #000;
    stroke-width: 1;
}

.viewer-status {
    height: 27px;
    flex: none;
    display: flex;
    align-items: center;
    padding-left: 11px;
    background: #f0eeeb;
    color: #55534e;
    font-size: 12.3px;
}

.status-bytes {
    margin-left: 6px;
}

.status-zoom {
    margin-left: 11px;
}

.status-count {
    margin-left: auto;
    margin-right: 48px;
}

/* Nautilus floating status */
.selection-note {
    position: absolute;
    right: 0;
    bottom: 0;
    width: 224px;
    height: 19px;
    line-height: 17px;
    text-align: center;
    background: #f5f4b4;
    border: 1px solid #d6d66a;
    border-right: none;
    border-bottom: none;
    border-radius: 4px 0 0 0;
    color: #55534e;
    white-space: nowrap;
}
```
